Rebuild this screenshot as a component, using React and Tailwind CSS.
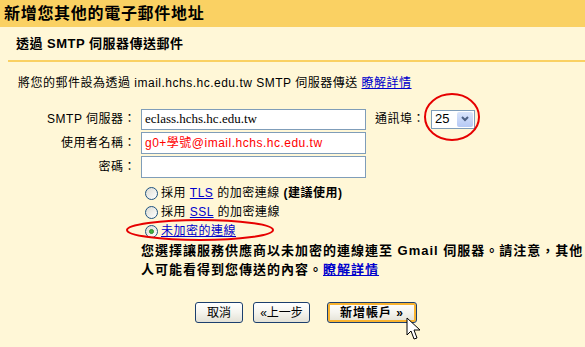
import React from "react";

const F = { fontFamily: '"Liberation Sans", "Noto Sans CJK TC", sans-serif' };

function Radio({ checked }) {
  return (
    <span className="relative inline-flex w-[13px] h-[13px] rounded-full border border-[#1c5180] bg-gradient-to-br from-[#dcdcd4] to-white items-center justify-center shrink-0">
      {checked && <span className="w-[5px] h-[5px] rounded-full bg-[#3fae3f] border border-[#2a8a2a]" />}
    </span>
  );
}

function Btn({ children, w, primary }) {
  return (
    <button
      className={`h-[21px] ${w} rounded-[3px] border border-[#1c3f6e] bg-gradient-to-b from-white via-[#f5f4ee] to-[#e3e1d6] text-[12px] text-black flex items-center justify-center ${primary ? "shadow-[inset_0_0_0_2px_#f8b330] font-bold tracking-[1px]" : ""}`}
      style={F}
    >
      {children}
    </button>
  );
}

export default function App() {
  return (
    <div className="relative w-[585px] h-[347px] bg-[#fff7d7] overflow-hidden text-black" style={F}>
      <div className="h-[27px] bg-[#fad163] flex items-center pl-1 text-[16px] font-bold tracking-[0.7px]">
        新增您其他的電子郵件地址
      </div>
      <div className="h-[33px] flex items-center pl-4 text-[13px] font-bold tracking-[0.5px]">
        透過 SMTP 伺服器傳送郵件
      </div>
      <div className="ml-2 h-[2px] bg-[#fad163]" />

      <div className="mt-[13px] pl-[18px] text-[12px] leading-[16px] tracking-[0.5px]">
        將您的郵件設為透過 imail.hchs.hc.edu.tw SMTP 伺服器傳送{" "}
        <a className="text-[#0000cc] underline">瞭解詳情</a>
      </div>

      <div className="mt-[17px] flex flex-col gap-[2px] text-[12px] tracking-[0.5px]">
        <div className="flex items-center h-[22px]">
          <span className="w-[136px] text-right">SMTP 伺服器：</span>
          <div className="ml-[5px] w-[225px] h-[21px] border border-[#7f9db9] bg-white flex items-center pl-[3px] text-[13px] tracking-normal" style={{ fontFamily: '"Liberation Serif", serif' }}>
            eclass.hchs.hc.edu.tw
          </div>
          <span className="ml-[9px]">通訊埠：</span>
          <div className="ml-[6px] w-[44px] h-[19px] border border-[#7f9db9] bg-white flex items-center justify-between pl-[3px] pr-[1px] text-[13px] tracking-normal">
            <span>25</span>
            <span className="w-[16px] h-[15px] rounded-[2px] bg-gradient-to-b from-[#dbe5fb] to-[#b6c9f5] flex items-center justify-center">
              <svg width="8" height="6" viewBox="0 0 8 6"><path d="M1 1 L4 4 L7 1" stroke="#4d6185" strokeWidth="2" fill="none" /></svg>
            </span>
          </div>
        </div>
        <div className="flex items-center h-[22px]">
          <span className="w-[136px] text-right">使用者名稱：</span>
          <div className="ml-[5px] w-[225px] h-[22px] border border-[#7f9db9] bg-white flex items-center pl-[3px] text-[#ff0000] text-[12px]">
            g0+學號@imail.hchs.hc.edu.tw
          </div>
        </div>
        <div className="flex items-center h-[22px]">
          <span className="w-[136px] text-right">密碼：</span>
          <div className="ml-[5px] w-[225px] h-[22px] border border-[#7f9db9] bg-white" />
        </div>
      </div>

      <div className="mt-[8px] pl-[145px] flex flex-col gap-[5px] text-[12px] tracking-[0.5px]">
        <div className="flex items-center gap-[3px] h-[14px]">
          <Radio />
          <span>採用 <a className="text-[#0000cc] underline">TLS</a> 的加密連線 <b>(建議使用)</b></span>
        </div>
        <div className="flex items-center gap-[3px] h-[14px]">
          <Radio />
          <span>採用 <a className="text-[#0000cc] underline">SSL</a> 的加密連線</span>
        </div>
        <div className="flex items-center gap-[3px] h-[14px]">
          <Radio checked />
          <a className="text-[#0000cc] underline">未加密的連線</a>
        </div>
      </div>

      <div className="mt-[3px] pl-[141px] text-[13px] leading-[19px] font-bold tracking-[1px]">
        您選擇讓服務供應商以未加密的連線連至 Gmail 伺服器。請注意，其他
        <br />
        人可能看得到您傳送的內容。<a className="text-[#0000cc] underline">瞭解詳情</a>
      </div>

      <div className="mt-[23px] flex items-center pl-[195px]">
        <Btn w="w-[48px]">取消</Btn>
        <div className="w-[10px]" />
        <Btn w="w-[57px]">«上一步</Btn>
        <div className="w-[17px]" />
        <Btn w="w-[90px]" primary>新增帳戶 »</Btn>
      </div>

      <svg className="absolute left-0 top-0 pointer-events-none" width="585" height="347">
        <ellipse cx="452" cy="117" rx="27" ry="23" fill="none" stroke="#e60000" strokeWidth="2" />
        <ellipse cx="200" cy="230" rx="73" ry="10" fill="none" stroke="#e60000" strokeWidth="2" />
        <path d="M407 318 L407 335 L411 331 L414 339 L417 338 L414 330 L420 330 Z" fill="white" stroke="black" strokeWidth="1" />
      </svg>
    </div>
  );
}
